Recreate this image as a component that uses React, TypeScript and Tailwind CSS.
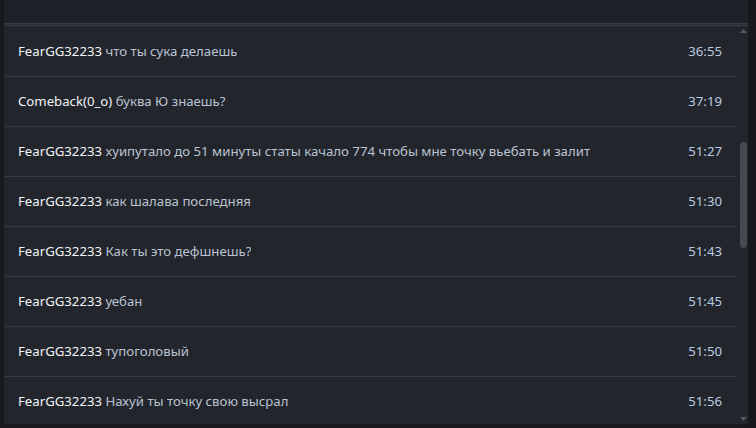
import { ReactElement } from "react";

type Msg = { name: string; text: string; time: string };

const messages: Msg[] = [
  { name: "FearGG32233", text: "что ты сука делаешь", time: "36:55" },
  { name: "Comeback(0_o)", text: "буква Ю знаешь?", time: "37:19" },
  {
    name: "FearGG32233",
    text: "хуипутало до 51 минуты статы качало 774 чтобы мне точку вьебать и залит",
    time: "51:27",
  },
  { name: "FearGG32233", text: "как шалава последняя", time: "51:30" },
  { name: "FearGG32233", text: "Как ты это дефшнешь?", time: "51:43" },
  { name: "FearGG32233", text: "уебан", time: "51:45" },
  { name: "FearGG32233", text: "тупоголовый", time: "51:50" },
  { name: "FearGG32233", text: "Нахуй ты точку свою высрал", time: "51:56" },
];

export default function App(): ReactElement {
  return (
    <div
      className="w-full h-[428px] flex bg-[#18191d] overflow-hidden"
      style={{ fontFamily: '"Noto Sans", "Open Sans", sans-serif' }}
    >
      <div className="w-1 shrink-0 bg-[#18191d]" />
      <div className="flex-1 flex flex-col">
        {/* header, title scrolled out of view */}
        <div className="h-[23px] shrink-0 bg-[#1f2128]" />
        <div className="h-px bg-[#3a3d46]" />
        <div className="h-px bg-[#2a2c33]" />
        <div className="h-px bg-[#3a3d46]" />
        <div className="flex h-[398px] bg-[#22252c]">
          <ul className="flex-1 overflow-hidden pt-px">
            {messages.map((m, i) => (
              <li
                key={i}
                className="h-[50px] border-b border-[#363942] flex items-center justify-between pl-[14px] pr-[15px] text-[13.2px]"
              >
                <div className="truncate">
                  <span className="text-[#f2f4f7]">{m.name}</span>{" "}
                  <span className="text-[#b9c3d1]">{m.text}</span>
                </div>
                <span className="text-[#b9cbe0] shrink-0">{m.time}</span>
              </li>
            ))}
          </ul>
          <div className="w-[11px] shrink-0 flex flex-col items-center pt-[3px]">
            <svg width="7" height="4" viewBox="0 0 7 4" className="mb-[109px] ml-px">
              <polygon points="0,4 3.5,0 7,4" fill="#55585f" />
            </svg>
            <div className="w-[7px] h-[106px] rounded-full bg-[#464950] ml-px" />
            <div className="flex-1" />
            <svg width="7" height="4" viewBox="0 0 7 4" className="mb-[3px] ml-px">
              <polygon points="0,0 3.5,4 7,0" fill="#55585f" />
            </svg>
          </div>
        </div>
        <div className="flex-1 bg-[#18191d]" />
      </div>
      <div className="w-2 shrink-0 bg-[#17181c]" />
    </div>
  );
}
